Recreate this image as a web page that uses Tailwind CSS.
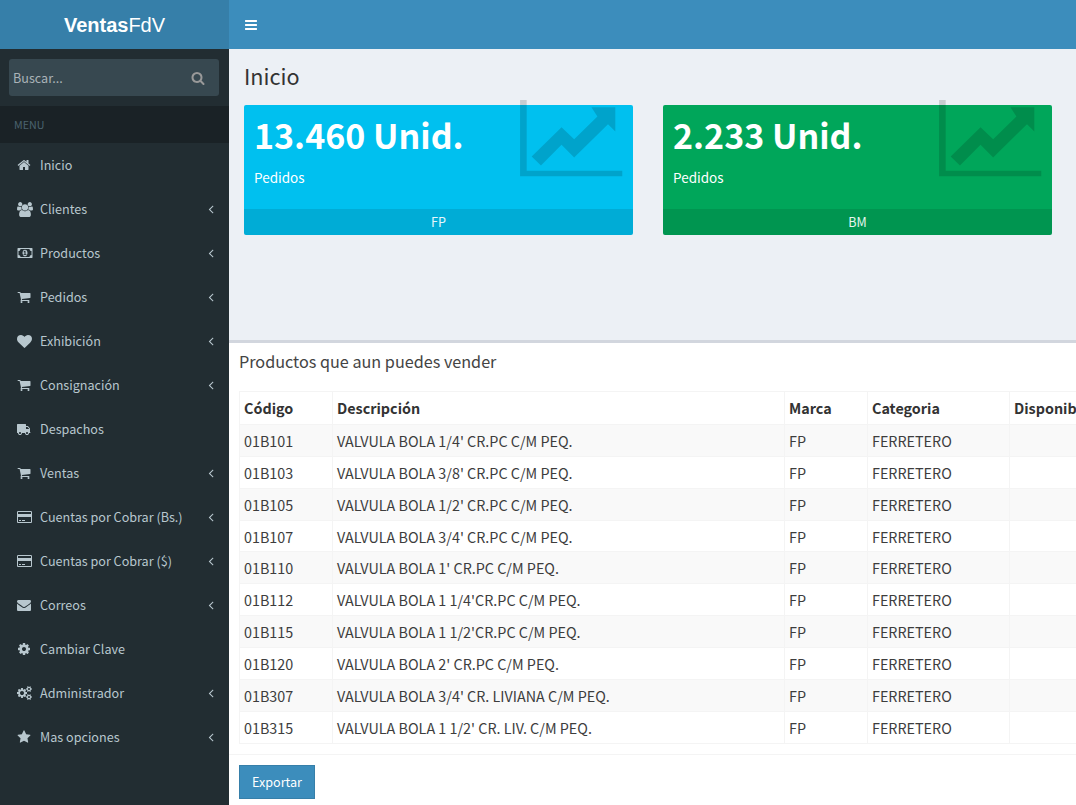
<!DOCTYPE html>
<html lang="es">
<head>
<meta charset="utf-8">
<title>VentasFdV</title>
<script src="https://cdn.jsdelivr.net/npm/@tailwindcss/browser@4"></script>
</head>
<body class="h-[805px] w-[1076px] overflow-hidden bg-white font-['Noto_Sans_CJK_SC','Noto_Sans',sans-serif] text-[12.6px] text-[#333]">
<svg class="hidden">
  <symbol id="cart" viewBox="0 0 1792 1792"><path d="M704 1536q0 52-38 90t-90 38-90-38-38-90 38-90 90-38 90 38 38 90zm896 0q0 52-38 90t-90 38-90-38-38-90 38-90 90-38 90 38 38 90zm128-1088v512q0 24-16.500 42.500t-40.500 21.500l-1044 122q13 60 13 70 0 16-24 64h920q26 0 45 19t19 45-19 45-45 19h-1024q-26 0-45-19t-19-45q0-11 8-31.500t16-36 21.500-40 15.500-29.500l-177-823h-204q-26 0-45-19t-19-45 19-45 45-19h256q16 0 28.500 6.500t19.500 15.500 13 24.500 8 26 5.500 29.500 4.500 26h1201q26 0 45 19t19 45z"/></symbol>
  <symbol id="card" viewBox="0 0 1920 1792"><path d="M1760 128q66 0 113 47t47 113v1216q0 66-47 113t-113 47h-1600q-66 0-113-47t-47-113v-1216q0-66 47-113t113-47h1600zm-1600 128q-13 0-22.500 9.500t-9.500 22.500v224h1664v-224q0-13-9.500-22.500t-22.500-9.500h-1600zm1600 1280q13 0 22.500-9.500t9.500-22.500v-608h-1664v608q0 13 9.500 22.500t22.500 9.500h1600zm-1504-128v-128h256v128h-256zm384 0v-128h384v128h-384z"/></symbol>
  <symbol id="left" viewBox="0 0 1792 1792"><path d="M1203 544q0 13-10 23l-393 393 393 393q10 10 10 23t-10 23l-50 50q-10 10-23 10t-23-10l-466-466q-10-10-10-23t10-23l466-466q10-10 23-10t23 10l50 50q10 10 10 23z"/></symbol>
  <symbol id="chart" viewBox="15 15 310 232"><path d="M15 15h20v213h288v17h-308z"/><path d="M50 185l90-88 38 36 70-68-18-28h72v73l-22-22-102 100-38-38-62 62z"/></symbol>
</svg>
<div class="flex h-full w-full">
  <aside class="flex h-full w-[229px] shrink-0 flex-col bg-[#222d32]">
    <div class="flex h-[49px] shrink-0 items-center justify-center bg-[#367fa9] font-['Liberation_Sans',sans-serif] text-[20px] text-white"><b>Ventas</b>FdV</div>
    <div class="flex h-[57px] shrink-0 items-center pl-[9px] pr-[10px]">
      <div class="flex h-[37px] w-full items-center justify-between rounded-[3px] bg-[#374850] pl-[4px] pr-[14px]">
        <span class="pt-[1px] text-[12.6px] text-[#aab3b8]">Buscar...</span>
        <svg class="h-[14px] w-[14px] fill-[#999]" viewBox="0 0 1792 1792"><path d="M1216 832q0-185-131.500-316.500t-316.500-131.500-316.500 131.500-131.500 316.500 131.500 316.500 316.500 131.500 316.500-131.500 131.500-316.500zm512 832q0 52-38 90t-90 38q-54 0-90-38l-343-342q-179 124-399 124-143 0-273.500-55.500t-225-150-150-225-55.500-273.500 55.500-273.500 150-225 225-150 273.500-55.500 273.500 55.500 225 150 150 225 55.500 273.500q0 220-124 399l343 343q37 37 37 90z"/></svg>
      </div>
    </div>
    <div class="flex h-[37px] shrink-0 items-center bg-[#1a2226] pl-[14px] pt-[2px] text-[10.7px] text-[#4b646f]">MENU</div>
    <nav class="text-[12.6px] text-[#b8c7ce]">
      <a class="flex h-[44px] items-center pl-[17px] pr-[11px]"><span class="flex w-[23px] shrink-0"><svg class="h-[14px] w-[14px] fill-[#b8c7ce]" viewBox="0 0 1792 1792"><path d="M1472 992v480q0 26-19 45t-45 19h-384v-384h-256v384h-384q-26 0-45-19t-19-45v-480q0-1 .5-3t.5-3l575-474 575 474q1 2 1 6zm223-69l-62 74q-8 9-21 11h-3q-13 0-21-7l-692-577-692 577q-12 8-24 7-13-2-21-11l-62-74q-8-10-7-23.500t11-21.500l719-599q32-26 76-26t76 26l244 204v-195q0-14 9-23t23-9h192q14 0 23 9t9 23v408l219 182q10 8 11 21.500t-7 23.500z"/></svg></span><span class="grow">Inicio</span></a>
      <a class="flex h-[44px] items-center pl-[17px] pr-[11px]"><span class="flex w-[23px] shrink-0"><svg class="h-[15px] w-[16px] fill-[#b8c7ce]" viewBox="0 0 1920 1792"><path d="M593 896q-162 5-265 128h-134q-82 0-138-40.500t-56-118.500q0-353 124-353 6 0 43.500 21t97.500 42.500 119 21.500q67 0 133-23-5 37-5 66 0 139 81 256zm1071 637q0 120-73 189.500t-194 69.500h-874q-121 0-194-69.500t-73-189.500q0-53 3.500-103.500t14-109 26.500-108.500 43-97.500 62-81 85.500-53.500 111.500-20q10 0 43 21.500t73 48 107 48 135 21.500 135-21.500 107-48 73-48 43-21.500q61 0 111.500 20t85.500 53.500 62 81 43 97.500 26.500 108.500 14 109 3.500 103.500zm-1024-1277q0 106-75 181t-181 75-181-75-75-181 75-181 181-75 181 75 75 181zm704 384q0 159-112.500 271.500t-271.500 112.500-271.500-112.500-112.500-271.500 112.500-271.500 271.500-112.500 271.500 112.500 112.500 271.500zm576 225q0 78-56 118.500t-138 40.500h-134q-103-123-265-128 81-117 81-256 0-29-5-66 66 23 133 23 59 0 119-21.500t97.500-42.500 43.500-21q124 0 124 353zm-128-609q0 106-75 181t-181 75-181-75-75-181 75-181 181-75 181 75 75 181z"/></svg></span><span class="grow">Clientes</span><svg class="h-[14px] w-[14px] fill-[#b8c7ce]"><use href="#left"/></svg></a>
      <a class="flex h-[44px] items-center pl-[17px] pr-[11px]"><span class="flex w-[23px] shrink-0"><svg class="h-[14px] w-[16px] fill-[#b8c7ce]" viewBox="0 0 2048 1792"><path d="M832 1152h384v-96h-128v-448h-114l-148 137 77 80q42-37 55-57h2v288h-128v96zm512-256q0 70-21 142t-59.500 134-101.500 101-138 39-138-39-101.500-101-59.500-134-21-142 21-142 59.500-134 101.500-101 138-39 138 39 101.500 101 59.500 134 21 142zm512 256v-512q-106 0-181-75t-75-181h-1152q0 106-75 181t-181 75v512q106 0 181 75t75 181h1152q0-106 75-181t181-75zm128-832v1152q0 26-19 45t-45 19h-1792q-26 0-45-19t-19-45v-1152q0-26 19-45t45-19h1792q26 0 45 19t19 45z"/></svg></span><span class="grow">Productos</span><svg class="h-[14px] w-[14px] fill-[#b8c7ce]"><use href="#left"/></svg></a>
      <a class="flex h-[44px] items-center pl-[17px] pr-[11px]"><span class="flex w-[23px] shrink-0"><svg class="h-[14px] w-[14px] fill-[#b8c7ce]"><use href="#cart"/></svg></span><span class="grow">Pedidos</span><svg class="h-[14px] w-[14px] fill-[#b8c7ce]"><use href="#left"/></svg></a>
      <a class="flex h-[44px] items-center pl-[17px] pr-[11px]"><span class="flex w-[23px] shrink-0"><svg class="h-[15px] w-[15px] fill-[#b8c7ce]" viewBox="0 0 1792 1792"><path d="M896 1664q-26 0-44-18l-624-602q-10-8-27.500-26t-55.500-65.500-68-97.500-53.500-121-23.500-138q0-220 127-344t351-124q62 0 126.500 21.500t120 58 95.500 68.500 76 68q36-36 76-68t95.500-68.500 120-58 126.500-21.500q224 0 351 124t127 344q0 221-229 450l-623 600q-18 18-44 18z"/></svg></span><span class="grow">Exhibición</span><svg class="h-[14px] w-[14px] fill-[#b8c7ce]"><use href="#left"/></svg></a>
      <a class="flex h-[44px] items-center pl-[17px] pr-[11px]"><span class="flex w-[23px] shrink-0"><svg class="h-[14px] w-[14px] fill-[#b8c7ce]"><use href="#cart"/></svg></span><span class="grow">Consignación</span><svg class="h-[14px] w-[14px] fill-[#b8c7ce]"><use href="#left"/></svg></a>
      <a class="flex h-[44px] items-center pl-[17px] pr-[11px]"><span class="flex w-[23px] shrink-0"><svg class="h-[14px] w-[14px] -scale-x-100 fill-[#b8c7ce]" viewBox="0 0 1792 1792"><path d="M640 1408q0-52-38-90t-90-38-90 38-38 90 38 90 90 38 90-38 38-90zm-384-512h384v-256h-158q-13 0-22 9l-195 195q-9 9-9 22v30zm1280 512q0-52-38-90t-90-38-90 38-38 90 38 90 90 38 90-38 38-90zm256-1088v1024q0 15-4 26.500t-13.500 18.500-16.500 11.500-23.500 6-22.500 2-25.500 0-22.500-.5q0 106-75 181t-181 75-181-75-75-181h-384q0 106-75 181t-181 75-181-75-75-181h-64q-3 0-22.500.5t-25.500 0-22.500-2-23.500-6-16.500-11.500-13.500-18.500-4-26.500q0-26 19-45t45-19v-320q0-8-.5-35t0-38 2.500-34.500 6.500-37 14-30.500 22.500-30l198-198q19-19 50.500-32t58.500-13h160v-192q0-26 19-45t45-19h1024q26 0 45 19t19 45z"/></svg></span><span class="grow">Despachos</span></a>
      <a class="flex h-[44px] items-center pl-[17px] pr-[11px]"><span class="flex w-[23px] shrink-0"><svg class="h-[14px] w-[14px] fill-[#b8c7ce]"><use href="#cart"/></svg></span><span class="grow">Ventas</span><svg class="h-[14px] w-[14px] fill-[#b8c7ce]"><use href="#left"/></svg></a>
      <a class="flex h-[44px] items-center pl-[17px] pr-[11px]"><span class="flex w-[23px] shrink-0"><svg class="h-[14px] w-[15px] fill-[#b8c7ce]"><use href="#card"/></svg></span><span class="grow">Cuentas por Cobrar (Bs.)</span><svg class="h-[14px] w-[14px] fill-[#b8c7ce]"><use href="#left"/></svg></a>
      <a class="flex h-[44px] items-center pl-[17px] pr-[11px]"><span class="flex w-[23px] shrink-0"><svg class="h-[14px] w-[15px] fill-[#b8c7ce]"><use href="#card"/></svg></span><span class="grow">Cuentas por Cobrar ($)</span><svg class="h-[14px] w-[14px] fill-[#b8c7ce]"><use href="#left"/></svg></a>
      <a class="flex h-[44px] items-center pl-[17px] pr-[11px]"><span class="flex w-[23px] shrink-0"><svg class="h-[14px] w-[14px] fill-[#b8c7ce]" viewBox="0 0 1792 1792"><path d="M1792 710v794q0 66-47 113t-113 47h-1472q-66 0-113-47t-47-113v-794q44 49 101 87 362 246 497 345 57 42 92.500 65.500t94.500 48 110 24.500h2q51 0 110-24.500t94.500-48 92.500-65.500q170-123 498-345 57-39 100-87zm0-294q0 79-49 151t-122 123q-376 261-468 325-10 7-42.500 30.500t-54 38-52 32.500-57.500 27-50 9h-2q-23 0-50-9t-57.500-27-52-32.500-54-38-42.500-30.500q-91-64-262-182.500t-205-142.500q-62-42-117-115.500t-55-136.500q0-78 41.500-130t118.500-52h1472q65 0 112.500 47t47.500 113z"/></svg></span><span class="grow">Correos</span><svg class="h-[14px] w-[14px] fill-[#b8c7ce]"><use href="#left"/></svg></a>
      <a class="flex h-[44px] items-center pl-[17px] pr-[11px]"><span class="flex w-[23px] shrink-0"><svg class="h-[14px] w-[14px] fill-[#b8c7ce]" viewBox="0 0 1792 1792"><path d="M1152 896q0-106-75-181t-181-75-181 75-75 181 75 181 181 75 181-75 75-181zm512-109v222q0 12-8 23t-20 13l-185 28q-19 54-39 91 35 50 107 138 10 12 10 25t-9 23q-27 37-99 108t-94 71q-12 0-26-9l-138-108q-44 23-91 38-16 136-29 186-7 28-36 28h-222q-14 0-24.500-8.500t-11.500-21.500l-28-184q-49-16-90-37l-141 107q-10 9-25 9-14 0-25-11-126-114-165-168-7-10-7-23 0-12 8-23 15-21 51-66.500t54-70.500q-27-50-41-99l-183-27q-13-2-21-12.500t-8-23.500v-222q0-12 8-23t19-13l186-28q14-46 39-92-40-57-107-138-10-12-10-24 0-10 9-23 26-36 98.500-107.500t94.500-71.500q13 0 26 10l138 107q44-23 91-38 16-136 29-186 7-28 36-28h222q14 0 24.500 8.500t11.500 21.500l28 184q49 16 90 37l142-107q9-9 24-9 13 0 25 10 129 119 165 170 7 8 7 22 0 12-8 23-15 21-51 66.500t-54 70.500q26 50 41 98l183 28q13 2 21 12.500t8 23.500z"/></svg></span><span class="grow">Cambiar Clave</span></a>
      <a class="flex h-[44px] items-center pl-[17px] pr-[11px]"><span class="flex w-[23px] shrink-0"><svg class="h-[14px] w-[15px] fill-[#b8c7ce]" viewBox="0 0 1920 1792"><path d="M896 896q0-106-75-181t-181-75-181 75-75 181 75 181 181 75 181-75 75-181zm768 512q0-52-38-90t-90-38-90 38-38 90q0 53 37.500 90.500t90.500 37.500 90.500-37.500 37.500-90.500zm0-1024q0-52-38-90t-90-38-90 38-38 90q0 53 37.500 90.500t90.500 37.500 90.500-37.500 37.500-90.500zm-384 421v185q0 10-7 19.500t-16 10.500l-155 24q-11 35-32 76 34 48 90 115 7 11 7 20 0 12-7 19-23 30-82.500 89.500t-78.500 59.500q-11 0-21-7l-115-90q-37 19-77 31-11 108-23 155-7 24-30 24h-186q-11 0-20-7.500t-10-17.500l-23-153q-34-10-75-31l-118 89q-7 7-20 7-11 0-21-8-144-133-144-160 0-9 7-19 10-14 41-53t47-61q-23-44-35-82l-152-24q-10-1-17-9.500t-7-19.500v-185q0-10 7-19.500t16-10.500l155-24q11-35 32-76-34-48-90-115-7-10-7-20 0-12 7-20 22-30 82-89t79-59q11 0 21 7l115 90q34-18 77-32 11-108 23-154 7-24 30-24h186q11 0 20 7.500t10 17.500l23 153q34 10 75 31l118-89q8-7 20-7 11 0 21 8 144 133 144 160 0 8-7 19-12 16-42 54t-45 60q23 48 34 82l152 23q10 2 17 10.500t7 19.500zm640 533v140q0 16-149 31-12 27-30 52 51 113 51 138 0 4-4 7-122 71-124 71-8 0-46-47t-52-68q-20 2-30 2t-30-2q-14 21-52 68t-46 47q-2 0-124-71-4-3-4-7 0-25 51-138-18-25-30-52-149-15-149-31v-140q0-16 149-31 13-29 30-52-51-113-51-138 0-4 4-7 4-2 35-20t59-34 30-16q8 0 46 46.500t52 67.500q20-2 30-2t30 2q51-71 92-112l6-2q4 0 124 70 4 3 4 7 0 25-51 138 17 23 30 52 149 15 149 31zm0-1024v140q0 16-149 31-12 27-30 52 51 113 51 138 0 4-4 7-122 71-124 71-8 0-46-47t-52-68q-20 2-30 2t-30-2q-14 21-52 68t-46 47q-2 0-124-71-4-3-4-7 0-25 51-138-18-25-30-52-149-15-149-31v-140q0-16 149-31 13-29 30-52-51-113-51-138 0-4 4-7 4-2 35-20t59-34 30-16q8 0 46 46.500t52 67.500q20-2 30-2t30 2q51-71 92-112l6-2q4 0 124 70 4 3 4 7 0 25-51 138 17 23 30 52 149 15 149 31z"/></svg></span><span class="grow">Administrador</span><svg class="h-[14px] w-[14px] fill-[#b8c7ce]"><use href="#left"/></svg></a>
      <a class="flex h-[44px] items-center pl-[17px] pr-[11px]"><span class="flex w-[23px] shrink-0"><svg class="h-[14px] w-[14px] fill-[#b8c7ce]" viewBox="0 0 1792 1792"><path d="M1728 647q0 22-26 48l-363 354 86 500q1 7 1 20 0 21-10.500 35.500t-30.500 14.500q-19 0-40-12l-449-236-449 236q-22 12-40 12-21 0-31.500-14.500t-10.500-35.500q0-6 2-20l86-500-364-354q-25-27-25-48 0-37 56-46l502-73 225-455q19-41 49-41t49 41l225 455 502 73q56 9 56 46z"/></svg></span><span class="grow">Mas opciones</span><svg class="h-[14px] w-[14px] fill-[#b8c7ce]"><use href="#left"/></svg></a>
    </nav>
  </aside>
  <main class="flex h-full min-w-0 grow flex-col">
    <header class="flex h-[49px] shrink-0 items-center bg-[#3c8dbc] pl-[15px]">
      <svg class="h-[14px] w-[14px] fill-white" viewBox="0 0 1792 1792"><path d="M1664 1344v128q0 26-19 45t-45 19h-1408q-26 0-45-19t-19-45v-128q0-26 19-45t45-19h1408q26 0 45 19t19 45zm0-512v128q0 26-19 45t-45 19h-1408q-26 0-45-19t-19-45v-128q0-26 19-45t45-19h1408q26 0 45 19t19 45zm0-512v128q0 26-19 45t-45 19h-1408q-26 0-45-19t-19-45v-128q0-26 19-45t45-19h1408q26 0 45 19t19 45z"/></svg>
    </header>
    <section class="h-[291px] shrink-0 bg-[#ecf0f5] px-[15px] pt-[13px]">
      <h1 class="text-[21.6px] leading-[27px] text-[#333]">Inicio</h1>
      <div class="mt-[16px] flex gap-[30px]">
        <div class="relative h-[130px] w-[389px] rounded-[2px] bg-[#00c0ef] text-white">
          <svg class="absolute left-[276px] top-[-5px] h-[77px] w-[103px] fill-black/15"><use href="#chart"/></svg>
          <div class="h-[104px] px-[10px] pt-[9px]">
            <h3 class="text-[34px] font-bold leading-[42px]">13.460 Unid.</h3>
            <p class="mt-[11px] text-[13.5px] leading-[21px]">Pedidos</p>
          </div>
          <div class="flex h-[26px] items-center justify-center rounded-b-[2px] bg-black/10 text-[12.6px] text-white/90">FP</div>
        </div>
        <div class="relative h-[130px] w-[389px] rounded-[2px] bg-[#00a65a] text-white">
          <svg class="absolute left-[276px] top-[-5px] h-[77px] w-[103px] fill-black/15"><use href="#chart"/></svg>
          <div class="h-[104px] px-[10px] pt-[9px]">
            <h3 class="text-[34px] font-bold leading-[42px]">2.233 Unid.</h3>
            <p class="mt-[11px] text-[13.5px] leading-[21px]">Pedidos</p>
          </div>
          <div class="flex h-[26px] items-center justify-center rounded-b-[2px] bg-black/10 text-[12.6px] text-white/90">BM</div>
        </div>
      </div>
    </section>
    <section class="grow border-t-[3px] border-[#d2d6de] bg-white">
      <h3 class="px-[10px] pt-[8px] text-[16.2px] leading-[20px] text-[#444]">Productos que aun puedes vender</h3>
      <div class="mt-[20px] overflow-hidden pl-[10px]">
        <table class="w-[1000px] table-fixed border-collapse border border-[#f4f4f4] text-[14.35px] leading-[21px] text-[#3d3d3d]">
          <colgroup><col class="w-[93px]"><col class="w-[452px]"><col class="w-[83px]"><col class="w-[142px]"><col></colgroup>
          <thead>
            <tr class="h-[33px] text-left text-[#333] [&>th]:border [&>th]:border-[#f4f4f4] [&>th]:px-[4px] [&>th]:pb-[2px] [&>th]:font-bold">
              <th>Código</th><th>Descripción</th><th>Marca</th><th>Categoria</th><th>Disponible</th>
            </tr>
          </thead>
          <tbody class="[&_td]:border [&_td]:border-[#f4f4f4] [&_td]:px-[4px] [&_td]:py-0 [&>tr]:h-[31.86px] [&>tr:nth-child(odd)]:bg-[#f9f9f9]">
            <tr><td>01B101</td><td>VALVULA BOLA 1/4' CR.PC C/M PEQ.</td><td>FP</td><td>FERRETERO</td><td></td></tr>
            <tr><td>01B103</td><td>VALVULA BOLA 3/8' CR.PC C/M PEQ.</td><td>FP</td><td>FERRETERO</td><td></td></tr>
            <tr><td>01B105</td><td>VALVULA BOLA 1/2' CR.PC C/M PEQ.</td><td>FP</td><td>FERRETERO</td><td></td></tr>
            <tr><td>01B107</td><td>VALVULA BOLA 3/4' CR.PC C/M PEQ.</td><td>FP</td><td>FERRETERO</td><td></td></tr>
            <tr><td>01B110</td><td>VALVULA BOLA 1' CR.PC C/M PEQ.</td><td>FP</td><td>FERRETERO</td><td></td></tr>
            <tr><td>01B112</td><td>VALVULA BOLA 1 1/4'CR.PC C/M PEQ.</td><td>FP</td><td>FERRETERO</td><td></td></tr>
            <tr><td>01B115</td><td>VALVULA BOLA 1 1/2'CR.PC C/M PEQ.</td><td>FP</td><td>FERRETERO</td><td></td></tr>
            <tr><td>01B120</td><td>VALVULA BOLA 2' CR.PC C/M PEQ.</td><td>FP</td><td>FERRETERO</td><td></td></tr>
            <tr><td>01B307</td><td>VALVULA BOLA 3/4' CR. LIVIANA C/M PEQ.</td><td>FP</td><td>FERRETERO</td><td></td></tr>
            <tr><td>01B315</td><td>VALVULA BOLA 1 1/2' CR. LIV. C/M PEQ.</td><td>FP</td><td>FERRETERO</td><td></td></tr>
          </tbody>
        </table>
      </div>
      <div class="mt-[10px] border-t border-[#f4f4f4] px-[10px] pt-[10px]">
        <button class="h-[34px] w-[76px] border border-[#367fa9] bg-[#3c8dbc] pt-[1px] text-[12.6px] text-white">Exportar</button>
      </div>
    </section>
  </main>
</div>
</body>
</html>
